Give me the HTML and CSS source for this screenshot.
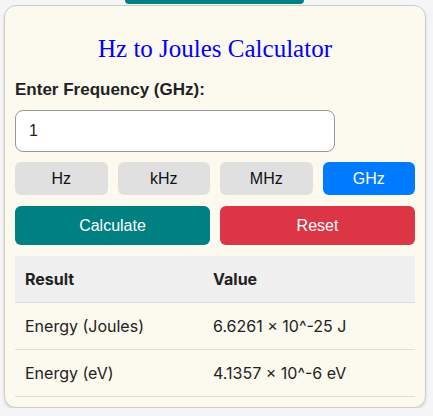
FILE: index.html
```html
<!DOCTYPE html>
<html lang="en">
<head>
    <meta charset="UTF-8">
    <meta name="viewport" content="width=device-width, initial-scale=1.0">
    <title>Hz to Joules Calculator</title>
    <link rel="stylesheet" href="styles.css">
</head>
<body>
    <div class="top-tab"></div>
    <div class="calculator">
        <h1>Hz to Joules Calculator</h1>
        <label for="frequency" id="freqLabel">Enter Frequency (GHz):</label>
        <input type="text" id="frequency" value="1">

        <div class="units">
            <button class="unit">Hz</button>
            <button class="unit">kHz</button>
            <button class="unit">MHz</button>
            <button class="unit active">GHz</button>
        </div>

        <div class="actions">
            <button class="calc">Calculate</button>
            <button class="reset">Reset</button>
        </div>

        <table class="results">
            <tr>
                <th>Result</th>
                <th>Value</th>
            </tr>
            <tr>
                <td>Energy (Joules)</td>
                <td>6.6261 × 10^-25 J</td>
            </tr>
            <tr>
                <td>Energy (eV)</td>
                <td>4.1357 × 10^-6 eV</td>
            </tr>
        </table>
    </div>
</body>
</html>
```

FILE: styles.css
```css
body {
    margin: 0;
    background: #f5f5f5;
    font-family: "Liberation Sans", Arial, sans-serif;
    color: #222;
}
.top-tab {
    width: 179px;
    height: 4px;
    margin-left: 125px;
    background: #008080;
    border-radius: 0 0 8px 8px;
}
.calculator {
    width: 400px;
    margin: 1px 0 0 4px;
    padding: 10px;
    background: #fcf9ee;
    border: 1px solid #ccc;
    border-radius: 12px;
    box-shadow: 0 2px 3px rgba(0, 0, 0, 0.12);
}
h1 {
    margin: 18px 0 16px;
    font-family: "Liberation Serif", "Times New Roman", serif;
    font-weight: normal;
    font-size: 25px;
    line-height: 30px;
    color: #0000ff;
    text-align: center;
}
label {
    display: block;
    font-weight: bold;
    font-size: 17px;
    line-height: 20px;
    margin-bottom: 10px;
}
input {
    box-sizing: border-box;
    width: 320px;
    height: 42px;
    padding: 0 13px;
    font-family: "Liberation Sans", Arial, sans-serif;
    font-size: 16px;
    color: #222;
    border: 1px solid #999;
    border-radius: 8px;
    background: #fff;
    display: block;
}
button {
    font-family: "Liberation Sans", Arial, sans-serif;
    font-size: 16px;
    border: none;
    border-radius: 6px;
    cursor: pointer;
}
.units {
    display: grid;
    grid-template-columns: repeat(4, 1fr);
    gap: 10px;
    margin-top: 10px;
}
.unit {
    height: 33px;
    background: #e0e0e0;
    color: #111;
}
.unit.active {
    background: #007bff;
    color: #fff;
}
.actions {
    display: grid;
    grid-template-columns: 1fr 1fr;
    gap: 10px;
    margin-top: 11px;
}
.actions button {
    height: 39px;
    color: #fff;
}
.calc {
    background: #008080;
}
.reset {
    background: #dc3545;
}
.results {
    width: 100%;
    margin-top: 11px;
    border-collapse: collapse;
    font-family: Inter, "Liberation Sans", sans-serif;
    font-size: 16px;
    line-height: 20px;
}
.results th,
.results td {
    text-align: left;
    padding: 13px 10px;
    border-bottom: 1px solid #ddd;
}
.results th {
    background: #f0f0f0;
    font-weight: bold;
}
.results th:first-child {
    width: 168px;
}
```
